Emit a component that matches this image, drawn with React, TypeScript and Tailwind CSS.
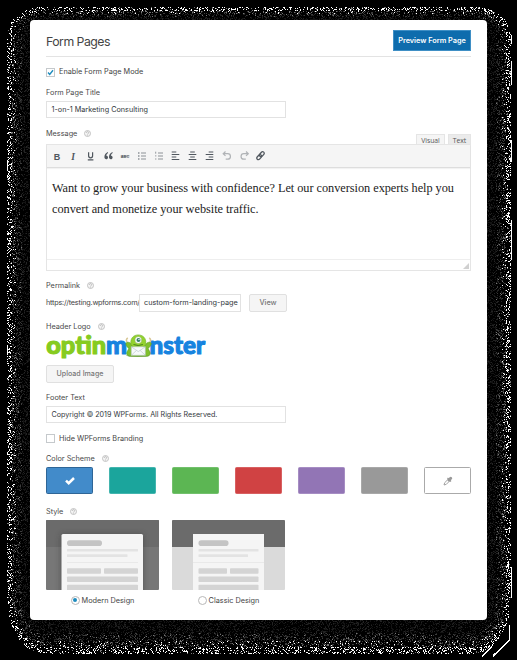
import type { ReactNode } from 'react';

const INTER = "font-['Inter','Liberation_Sans',sans-serif]";

// Speckled halo around the panel: dim close to it, bright at the rim.
function buildGrain() {
  let seed = 90210;
  const rand = () => {
    seed = (seed * 1664525 + 1013904223) >>> 0;
    return seed / 4294967296;
  };
  const shades = ['#131313', '#232323', '#3c3c3c', '#777777', '#ffffff'];
  const paths = ['', '', '', '', ''];
  for (let y = 5; y < 655; y++) {
    for (let x = 5; x < 513; x++) {
      if (x >= 30 && x < 487 && y >= 20 && y < 620) continue;
      const dx = x < 44 ? (44 - x) / 37 : x > 473 ? (x - 473) / 37 : 0;
      const dy = y < 34 ? (34 - y) / 27.5 : y > 600 ? (y - 600) / 53 : 0;
      const t = Math.sqrt(dx * dx + dy * dy);
      const r = rand();
      const s = rand();
      if (t > 1) continue;
      let k = -1;
      if (t > 0.87) {
        if (r < 0.27) k = s < 0.82 ? 4 : 3;
      } else if (t > 0.76) {
        if (r < 0.27) k = s < 0.16 ? 4 : s < 0.45 ? 3 : 2;
      } else if (t > 0.62) {
        if (r < 0.32) k = s < 0.08 ? 3 : s < 0.4 ? 2 : 1;
      } else if (r < 0.34) k = s < 0.3 ? 1 : 0;
      if (k >= 0) paths[k] += `M${x} ${y}h1v1h-1z`;
    }
  }
  return shades.map((fill, i) => ({ fill, d: paths[i] }));
}
const grain = buildGrain();

function Help() {
  return (
    <svg className="ml-[7px] size-[7px] shrink-0" viewBox="0 0 14 14">
      <circle cx="7" cy="7" r="6" fill="#f4f4f4" stroke="#bdbdbd" strokeWidth="1.8" />
      <path d="M4.8 5.6a2.2 2.2 0 1 1 3.2 1.9c-.8.4-1 .7-1 1.3M7 10v1.2" fill="none" stroke="#b0b0b0" strokeWidth="1.6" />
    </svg>
  );
}

function Label({ children, help, className }: { children: ReactNode; help?: boolean; className: string }) {
  return (
    <div className={`flex h-[10px] items-center text-[7.3px] leading-[10px] text-[#4a4a4a] ${className}`}>
      <span className="pt-[1px]">{children}</span>
      {help && <Help />}
    </div>
  );
}

function Toolbar() {
  const c = '#50575e';
  return (
    <svg className="block h-[22px] w-[230px]" viewBox="0 0 230 22" fill="none" stroke={c} strokeWidth="1.2">
      <g fill={c} stroke="none" fontFamily="Liberation Sans" fontWeight="700">
        <text x="6.7" y="14.5" fontSize="9">B</text>
        <text x="24.2" y="14.5" fontSize="9.5" fontStyle="italic" fontFamily="Liberation Serif">I</text>
        <text x="73.8" y="12.6" fontSize="4.2" textLength="8.4" lengthAdjust="spacingAndGlyphs">ABC</text>
      </g>
      <path d="M41.6 7.3v3.5a2 2 0 0 0 4 0V7.3M40.8 14.8h5.600" />
      <g fill={c} stroke="none">
        <path d="M60.800 7c-2.200 1-3.400 2.700-3.400 5 0 1.400.7 2.200 1.800 2.200 1 0 1.800-.7 1.800-1.800 0-1-.7-1.700-1.700-1.700.1-1.100.7-1.900 1.800-2.600zM65.400 7c-2.200 1-3.400 2.700-3.400 5 0 1.400.7 2.200 1.800 2.200 1 0 1.800-.7 1.800-1.800 0-1-.7-1.700-1.700-1.700.1-1.100.7-1.900 1.800-2.600z" />
      </g>
      <path d="M73.600 11h8.800" strokeWidth=".6" />
      <g stroke="#8c9196">
        <path d="M94 8h5M94 11h5M94 14h5M111 8h5M111 11h5M111 14h5" strokeWidth="1" />
        <path d="M91 8h1.500M91 11h1.500M91 14h1.500" strokeWidth="1.500" />
        <path d="M108.700 6.700v2M108 10.900h1.400M108 14h1.400" strokeWidth=".9" />
      </g>
      <path d="M124.700 7h4.600M124.700 9.500h7.600M124.700 12h4.600M124.700 14.500h7.600M143.200 7h4.600M141.700 9.500h7.600M143.200 12h4.600M141.700 14.500h7.600M161.700 7h4.600M158.700 9.500h7.600M161.700 12h4.600M158.700 14.500h7.600" />
      <g stroke="#b0b3b6">
        <path d="M178.500 6.500 176.200 8.700l2.300 2.200M176.300 8.700h4.400a2.700 2.700 0 0 1 0 5.500h-2" />
        <path d="M199 6.500l2.300 2.200-2.300 2.200M201.200 8.700h-4.400a2.700 2.700 0 0 0 0 5.500h2" />
      </g>
      <g transform="translate(213.500 10.700) rotate(-48)" strokeWidth="1.300">
        <rect x="-4.800" y="-1.600" width="5.600" height="3.200" rx="1.600" />
        <rect x="-.8" y="-1.600" width="5.600" height="3.200" rx="1.600" />
      </g>
    </svg>
  );
}

function Logo() {
  return (
    <svg className="mt-[3px] block h-[27px] w-[160px]" viewBox="0 0 160 27">
      <g fontFamily="Lato, Open Sans, sans-serif" fontWeight="900" fontSize="25" strokeWidth="1.1" strokeLinejoin="round">
        <text x=".2" y="20.200" fill="#86cb20" stroke="#86cb20" textLength="60" lengthAdjust="spacingAndGlyphs">optin</text>
        <text x="60" y="20.200" fill="#1683df" stroke="#1683df" textLength="21" lengthAdjust="spacingAndGlyphs">m</text>
        <text x="103.500" y="20.200" fill="#1683df" stroke="#1683df" textLength="55.500" lengthAdjust="spacingAndGlyphs">nster</text>
      </g>
      <ellipse cx="92" cy="21.500" rx="12" ry="1.500" fill="#a8b89b" />
      <path d="M81.500 9c-1.500-2-1.500-4 .3-5.200M103.500 9c1.500-2 1.500-4-.3-5.200" fill="none" stroke="#d8c795" strokeWidth="1.600" />
      <path d="M79.800 9.500c1.500-2 4.200-1.500 5.500.8l1.300 1.700h12l1.300-1.700c1.300-2.300 4-2.800 5.500-.8-.5 2.200-1.800 3.800-3.300 5l1.800 3.500c1 2.500-1 4.300-3.500 4.300H84.500c-2.500 0-4.500-1.800-3.500-4.300l1.800-3.500c-1.500-1.200-2.800-2.800-3-5z" fill="#80bf2c" stroke="#569a1b" strokeWidth=".6" />
      <path d="M84.800 9.500c-.5-5.500 3-8.600 7.500-8.600s8 3.100 7.500 8.600c-.3 2.500-3.300 4.500-7.500 4.500s-7.200-2-7.500-4.500z" fill="#93d22e" stroke="#6bae22" strokeWidth=".6" />
      <circle cx="92.300" cy="6" r="3.500" fill="#fff" stroke="#74a93a" strokeWidth=".5" />
      <circle cx="92.500" cy="6" r="2" fill="#317c67" />
      <circle cx="93" cy="5.500" r=".7" fill="#fff" />
      <path d="M87.500 10.500q4.700 2 9.400 0" fill="none" stroke="#376c16" strokeWidth=".8" />
      <path d="M85.300 12.800h14v8.500h-14z" fill="#f7fafb" stroke="#b4c4c4" strokeWidth=".6" />
      <path d="M85.300 12.800l7 4.800 7-4.800M85.300 21.300l5.200-4.900M99.300 21.300l-5.200-4.900" fill="none" stroke="#b4c4c4" strokeWidth=".6" />
    </svg>
  );
}

const swatches = [
  'bg-[#428bca] border-[#2e6596]',
  'bg-[#1ba59c] border-[#43b5ae]',
  'bg-[#5cb653] border-[#72c06c]',
  'bg-[#d04243] border-[#d86061]',
  'bg-[#9275b5] border-[#a68dc3]',
  'bg-[#999999] border-[#a8a8a8]',
  'bg-white border-[#aaaaaa]',
];

function Swatches() {
  return (
    <div className="mt-[4px] flex h-[27px] justify-between">
      {swatches.map((s, i) => (
        <div key={s} className={`flex w-[47px] items-center justify-center rounded-[1.500px] border ${s}`}>
          {i === 0 && (
            <svg className="size-[10px]" viewBox="0 0 10 10" fill="none" stroke="#fff" strokeWidth="2.500">
              <path d="M1 4.600l2.700 2.600L9 2" />
            </svg>
          )}
          {i === 6 && (
            <svg className="size-[10px]" viewBox="0 0 10 10" fill="none" stroke="#999">
              <path d="M1 9l.7-2.300 3.800-3.800 1.600 1.600-3.800 3.800z" strokeWidth=".9" />
              <path d="M6 4l1.700-1.700" strokeWidth="3" strokeLinecap="round" />
              <path d="M4.500 2l3.500 3.500" strokeWidth="1.300" />
            </svg>
          )}
        </div>
      ))}
    </div>
  );
}

function Thumb({ modern }: { modern: boolean }) {
  const x = modern ? 15.5 : 21;
  const w = modern ? 81.5 : 71;
  const ix = modern ? 21 : 26.5;
  const iw = modern ? 71 : 60;
  const half = (iw - 3) / 2;
  return (
    <svg className="block h-[70px] w-[113px] rounded-[1px]" viewBox="0 0 113 70">
      <defs>
        <filter id="cardShade" x="-20%" y="-20%" width="140%" height="140%">
          <feGaussianBlur stdDeviation="3" />
        </filter>
      </defs>
      <rect width="113" height="70" fill={modern ? '#777' : '#dadada'} />
      <rect width="113" height="27" fill="#6b6b6b" />
      {modern && <rect x={x} y="15" width={w} height="60" fill="#333" opacity=".55" filter="url(#cardShade)" />}
      <rect x={x} y="14" width={w} height="60" rx={modern ? 1.5 : 0} fill="#f5f5f5" />
      <rect x={ix} y="20.3" width={modern ? 35 : 30} height="5.7" rx="2.8" fill="#c4c4c4" />
      <rect x={ix} y="29" width={iw} height="2.6" rx=".5" fill="#e3e3e3" />
      <rect x={ix} y="34.2" width={iw - 10.5} height="2.8" rx=".5" fill="#e3e3e3" />
      <rect x={modern ? ix : x} y="42" width={modern ? iw : w} height="1" fill="#e9e9e9" />
      <g fill="#d4d4d4">
        <rect x={ix} y="48.3" width={half} height="5.5" rx=".8" />
        <rect x={ix + half + 3} y="48.3" width={half} height="5.5" rx=".8" />
        <rect x={ix} y="56.5" width={iw} height="5.5" rx=".8" />
        <rect x={ix} y="64.7" width={iw} height="6" rx=".8" />
      </g>
    </svg>
  );
}

function Style({ modern, name }: { modern: boolean; name: string }) {
  return (
    <div className="w-[113px]">
      <Thumb modern={modern} />
      <div className="mt-[5px] flex h-[10px] items-center justify-center gap-[2px] text-[7.3px] leading-[10px] text-[#444]">
        <span className="flex size-[9px] items-center justify-center rounded-full border border-[#b8b8b8] bg-white">
          {modern && <span className="size-[4px] rounded-full bg-[#1e8cbe]" />}
        </span>
        <span className="pt-[1px]">{name}</span>
      </div>
    </div>
  );
}

export default function App() {
  return (
    <div className={`relative h-[660px] w-[517px] overflow-hidden bg-black pt-[20px] pl-[30px] ${INTER}`}>
      <svg className="absolute inset-0" width="517" height="660" shapeRendering="crispEdges">
        {grain.map((g) => (
          <path key={g.fill} d={g.d} fill={g.fill} />
        ))}
        <path
          d="M511.500 35v9M511.500 61v24M511.500 140v22M511.500 220v40M511.500 567v31M509.500 625v15L493 656M492 647l-10 9M508.500 561v7M7.500 160v11M7.500 345v10"
          stroke="#fff"
          fill="none"
          strokeWidth="1.500"
        />
      </svg>
      <main className="relative h-[600px] w-[457px] rounded-[4px] bg-white px-[16px]">
        <header className="flex h-[37px] items-start justify-between border-b border-[#e3e3e3]">
          <h1 className="mt-[14px] text-[12.3px] leading-[16px] tracking-[-0.52px] text-[#444]">Form Pages</h1>
          <button className="mt-[10px] h-[21px] w-[78px] border border-[#3f8fc5] bg-[#0e6cad] pt-[1px] text-[7.3px] font-semibold whitespace-nowrap text-white">
            Preview Form Page
          </button>
        </header>

        <div className="flex h-[30px] items-center text-[7.3px] text-[#444]">
          <span className="mr-[4px] flex size-[9px] items-center justify-center border border-[#c5c9cc]">
            <svg className="size-[7px]" viewBox="0 0 7 7" fill="none" stroke="#1e8cbe" strokeWidth="1.400">
              <path d="M1 3.500l1.700 1.900L6 1.200" />
            </svg>
          </span>
          <span className="pt-[1px]">Enable Form Page Mode</span>
        </div>

        <Label className="">Form Page Title</Label>
        <div className="mt-[4px] flex h-[17px] w-[240px] items-center border border-[#e2e2e2] pt-[1px] pl-[4.500px] text-[7.25px] text-[#32373c]">
          1-on-1 Marketing Consulting
        </div>

        <div className="flex h-[26px] items-end justify-between">
          <Label help className="mb-[6px]">Message</Label>
          <div className="flex h-[10px] gap-[3px] font-['Open_Sans','Noto_Sans',sans-serif] text-[6.800px] leading-[11.500px] text-[#555]">
            <span className="w-[29px] border border-b-0 border-[#e5e5e5] bg-[#f5f5f5] text-center">Visual</span>
            <span className="w-[23px] border border-b-0 border-[#e5e5e5] bg-[#ebebeb] text-center">Text</span>
          </div>
        </div>

        <div className="flex h-[127px] flex-col border border-[#e5e5e5]">
          <div className="h-[23px] shrink-0 border-b border-[#dddddd] bg-[#f5f5f5] shadow-[0_1px_1px_rgba(0,0,0,0.05)]">
            <Toolbar />
          </div>
          <div className="grow pt-[10px] pl-[5px] font-['Liberation_Serif',serif] text-[12.3px] leading-[20.700px] tracking-[-0.035px] whitespace-nowrap text-[#222]">
            <p>Want to grow your business with confidence? Let our conversion experts help you</p>
            <p>convert and monetize your website traffic.</p>
          </div>
          <div className="flex h-[11px] shrink-0 items-end justify-end border-t border-[#eeeeee] p-[1px]">
            <svg className="size-[6px]" viewBox="0 0 6 6">
              <path d="M6 0v6H0z" fill="#d0d0d0" />
            </svg>
          </div>
        </div>

        <Label help className="mt-[9px]">Permalink</Label>
        <div className="mt-[4px] flex h-[18px] items-center text-[7.300px] text-[#444]">
          <span className="w-[93px] pt-[1px] tracking-[-0.230px] whitespace-nowrap">https://testing.wpforms.com/</span>
          <div className="flex h-[18px] w-[102px] items-center border border-[#e2e2e2] pt-[1px] pl-[4px] text-[#32373c]">
            <span className="tracking-[-0.020px] whitespace-nowrap">custom-form-landing-page</span>
          </div>
          <button className="ml-[8px] h-[18px] w-[38px] rounded-[2px] border border-[#e0e0e0] bg-[#f5f5f5] pt-[1px] font-medium text-[#777]">View</button>
        </div>

        <Label help className="mt-[9px]">Header Logo</Label>
        <Logo />
        <button className="mt-[4px] block h-[18px] w-[68px] rounded-[2px] border border-[#e0e0e0] bg-[#f5f5f5] pt-[1px] text-[7.100px] font-medium text-[#777]">
          Upload Image
        </button>

        <Label className="mt-[9px]">Footer Text</Label>
        <div className="mt-[4px] flex h-[17px] w-[240px] items-center border border-[#e2e2e2] pt-[1px] pl-[4.500px] text-[7.150px] text-[#32373c]">
          Copyright © 2019 WPForms. All Rights Reserved.
        </div>

        <div className="mt-[11px] flex h-[9px] items-center text-[7.300px] text-[#444]">
          <span className="mr-[4px] size-[9px] border border-[#c5c9cc]" />
          <span className="pt-[1px]">Hide WPForms Branding</span>
        </div>

        <Label help className="mt-[10px]">Color Scheme</Label>
        <Swatches />

        <Label help className="mt-[12px]">Style</Label>
        <div className="mt-[4px] flex gap-[13px]">
          <Style modern name="Modern Design" />
          <Style modern={false} name="Classic Design" />
        </div>
      </main>
    </div>
  );
}
